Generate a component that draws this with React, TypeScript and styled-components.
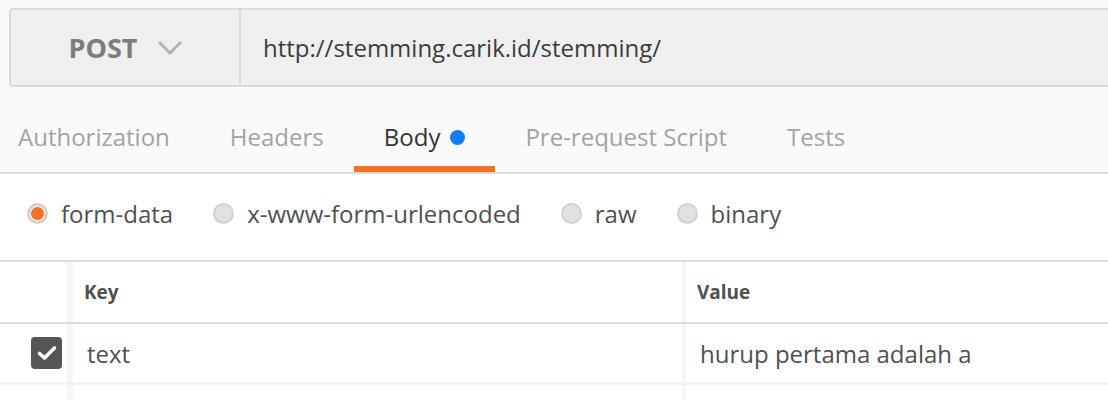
import styled, { createGlobalStyle } from "styled-components";

const GlobalStyle = createGlobalStyle`
  body {
    margin: 0;
    background: #fff;
    font-family: "Open Sans", "Noto Sans", sans-serif;
    overflow: hidden;
  }
`;

const tabs = [
  { label: "Authorization" },
  { label: "Headers" },
  { label: "Body", active: true, dot: true },
  { label: "Pre-request Script" },
  { label: "Tests" },
];

const bodyModes = [
  { label: "form-data", checked: true },
  { label: "x-www-form-urlencoded" },
  { label: "raw" },
  { label: "binary" },
];

function App() {
  return (
    <Page>
      <GlobalStyle />
      <Top>
        <UrlBar>
          <MethodBox>
            <Method>POST</Method>
            <svg width="26" height="16" viewBox="0 0 26 16">
              <path d="M2 2 L13 13 L24 2" fill="none" stroke="#b3b3b3" strokeWidth="3" />
            </svg>
          </MethodBox>
          <UrlText>http://stemming.carik.id/stemming/</UrlText>
        </UrlBar>
        <TabBar>
          {tabs.map((t) => (
            <Tab key={t.label} $active={!!t.active}>
              {t.label}
              {t.dot && <Dot />}
            </Tab>
          ))}
        </TabBar>
      </Top>

      <ModeRow>
        {bodyModes.map((m) => (
          <Mode key={m.label}>
            <Radio $checked={!!m.checked} />
            {m.label}
          </Mode>
        ))}
      </ModeRow>

      <Table>
        <HeadRow>
          <CheckCell />
          <KeyCell>
            <HeadText>Key</HeadText>
          </KeyCell>
          <ValueCell>
            <HeadText>Value</HeadText>
          </ValueCell>
        </HeadRow>
        <DataRow>
          <CheckCell>
            <Checkbox>
              <svg width="22" height="18" viewBox="0 0 22 18">
                <path d="M3.5 9.5 L8.5 14 L18.5 4" fill="none" stroke="#fff" strokeWidth="3.6" strokeLinecap="round" strokeLinejoin="round" />
              </svg>
            </Checkbox>
          </CheckCell>
          <KeyCell>
            <CellText>text</CellText>
          </KeyCell>
          <ValueCell>
            <CellText>hurup pertama adalah a</CellText>
          </ValueCell>
        </DataRow>
        <DataRow>
          <CheckCell />
          <KeyCell />
          <ValueCell />
        </DataRow>
      </Table>
    </Page>
  );
}

const Page = styled.div`
  width: 1108px;
  height: 400px;
  overflow: hidden;
`;

const Top = styled.div`
  background: #fafafa;
  padding-top: 8px;
`;

const UrlBar = styled.div`
  display: flex;
  margin-left: 9px;
  height: 79px;
  box-sizing: border-box;
  background: #efefef;
  border: 2px solid #dadada;
  border-right: none;
  border-radius: 4px 0 0 4px;
`;

const MethodBox = styled.div`
  width: 230px;
  flex-shrink: 0;
  display: flex;
  align-items: center;
  justify-content: center;
  gap: 20px;
  padding-left: 2px;
  box-sizing: border-box;
  border-right: 2px solid #dcdcdc;
`;

const Method = styled.span`
  font-size: 27px;
  font-weight: 700;
  color: #7d7d7d;
`;

const UrlText = styled.div`
  display: flex;
  align-items: center;
  padding-left: 22px;
  font-size: 24px;
  color: #3c3c3c;
`;

const TabBar = styled.div`
  display: flex;
  margin-top: 25px;
  margin-left: -12px;
  border-bottom: 2px solid #dcdcdc;
`;

const Tab = styled.div<{ $active: boolean }>`
  height: 60px;
  box-sizing: border-box;
  display: flex;
  align-items: center;
  gap: 10px;
  padding: 0 30px 6px;
  font-size: 24px;
  color: ${({ $active }) => ($active ? "#333" : "#a3a3a3")};
  border-bottom: 6px solid ${({ $active }) => ($active ? "#f47023" : "transparent")};
`;

const Dot = styled.span`
  width: 15px;
  height: 15px;
  border-radius: 50%;
  background: #117ff2;
  margin-top: 3px;
`;

const ModeRow = styled.div`
  display: flex;
  align-items: center;
  gap: 40px;
  height: 86px;
  box-sizing: border-box;
  padding: 0 0 8px 27px;
  background: #fff;
`;

const Mode = styled.label`
  display: flex;
  align-items: center;
  gap: 13px;
  font-size: 24px;
  color: #505050;
`;

const Radio = styled.span<{ $checked: boolean }>`
  width: 21px;
  height: 21px;
  box-sizing: border-box;
  border-radius: 50%;
  background: ${({ $checked }) => ($checked ? "#f47023" : "#e1e1e1")};
  border: 2px solid #d2d2d2;
  box-shadow: ${({ $checked }) => ($checked ? "inset 0 0 0 2px #ececec" : "none")};
`;

const Table = styled.div`
  border-top: 2px solid #dcdcdc;
`;

const HeadRow = styled.div`
  display: flex;
  height: 60px;
  border-bottom: 2px solid #dcdcdc;
`;

const DataRow = styled.div`
  display: flex;
  height: 58px;
  border-bottom: 3px solid #f2f2f2;
`;

const CheckCell = styled.div`
  width: 67px;
  flex-shrink: 0;
  display: flex;
  align-items: center;
  justify-content: flex-end;
  padding-right: 5px;
  box-sizing: border-box;
`;

const KeyCell = styled.div`
  width: 615px;
  flex-shrink: 0;
  display: flex;
  align-items: center;
  box-sizing: border-box;
  border-left: 6px solid #f6f6f6;
`;

const ValueCell = styled.div`
  flex: 1;
  display: flex;
  align-items: center;
  border-left: 4px solid #f6f6f6;
`;

const HeadText = styled.span`
  padding-left: 11px;
  font-size: 19px;
  font-weight: 700;
  color: #505050;
`;

const CellText = styled.span`
  padding-left: 14px;
  font-size: 24px;
  color: #505050;
`;

const Checkbox = styled.span`
  width: 31px;
  height: 32px;
  border-radius: 4px;
  background: #555;
  display: flex;
  align-items: center;
  justify-content: center;
`;

export default App;
